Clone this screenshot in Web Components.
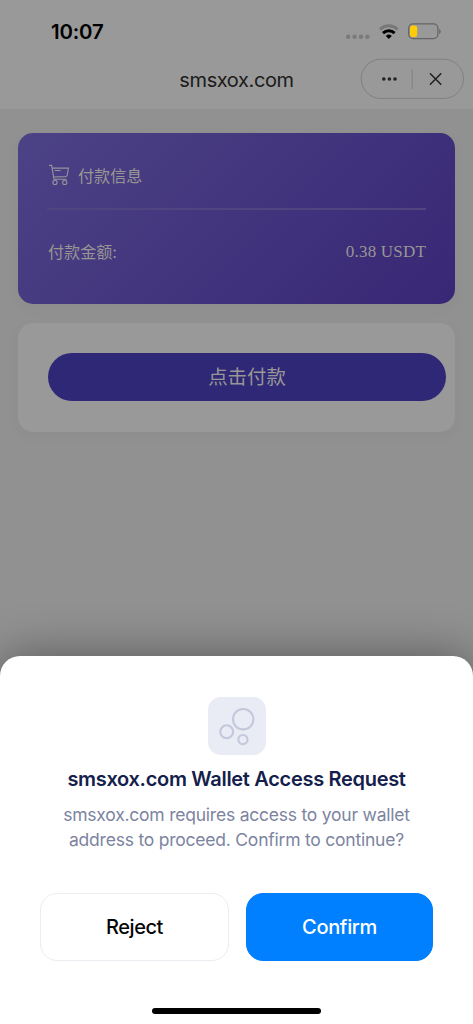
<!DOCTYPE html>
<html lang="zh">
<head>
<meta charset="utf-8">
<title>Wallet</title>
<style>
html,body{margin:0;height:100%;overflow:hidden;background:#919191}
body{font-family:Inter,"Noto Sans CJK SC",sans-serif}
</style>
</head>
<body>
<wallet-screen></wallet-screen>
<script>
const define=(name,html)=>{
  const t=document.createElement('template');
  t.innerHTML=html;
  customElements.define(name,class extends HTMLElement{
    constructor(){super();this.attachShadow({mode:'open'}).append(t.content.cloneNode(true));}
  });
};

define('status-bar',`
<style>
:host{display:flex;height:58px;box-sizing:border-box;padding:0 32px 0 51px;justify-content:space-between}
.time{font-weight:600;font-size:20.4px;line-height:24px;margin-top:20px;letter-spacing:-.15px;color:#000}
svg{display:block;margin-top:20px}
</style>
<span class="time">10:07</span>
<svg width="96" height="24" viewBox="345 20 96 24">
  <g fill="#7a7a7a"><circle cx="348.2" cy="36.8" r="2.2"/><circle cx="354.6" cy="36.8" r="2.2"/><circle cx="361" cy="36.8" r="2.2"/><circle cx="367.4" cy="36.8" r="2.2"/></g>
  <path d="M380 29.3A13 13 0 0 1 397.6 29.3" fill="none" stroke="#777" stroke-width="3"/>
  <path d="M383 33.1A8.6 8.6 0 0 1 394.6 33.1" fill="none" stroke="#000" stroke-width="3"/>
  <path d="M388.8 39L385.8 35.9A4.3 4.3 0 0 1 391.8 35.9Z" fill="#000"/>
  <rect x="408.7" y="23.9" width="29.2" height="14.8" rx="4.4" fill="none" stroke="#666" stroke-width="1.3"/>
  <rect x="410" y="25.6" width="7.2" height="11.5" rx="2.4" fill="#ffcc05"/>
  <path d="M439.2 29v4.8c2-.8 2-4 0-4.8z" fill="#666"/>
</svg>`);

define('capsule-menu',`
<style>:host{display:block;width:104px;height:41px}svg{display:block}</style>
<svg width="104" height="41" viewBox="360 58 104 41">
  <rect x="361.2" y="59.2" width="102.3" height="39.2" rx="19.6" fill="none" stroke="#808080"/>
  <g fill="#222"><circle cx="383.8" cy="79" r="1.8"/><circle cx="389.4" cy="79" r="1.8"/><circle cx="395" cy="79" r="1.8"/></g>
  <path d="M412.2 69v20" stroke="#828282"/>
  <path d="M430.4 73.8l10.4 10.4m0-10.4l-10.4 10.4" stroke="#222" stroke-width="1.6" stroke-linecap="round"/>
</svg>`);

define('title-bar',`
<style>
:host{display:grid;grid-template-columns:104px 1fr 104px;height:51px;padding:0 9px;align-items:start}
.t{grid-column:2;text-align:center;font-size:20px;letter-spacing:-.4px;line-height:24px;margin-top:10px;color:#1b1b1b}
</style>
<span class="t"><slot></slot></span><capsule-menu></capsule-menu>`);

define('cart-icon',`
<style>:host{display:block;width:22px;height:22px}svg{display:block}</style>
<svg width="22" height="22" viewBox="0 0 22 22" fill="none" stroke="#96949c" stroke-width="1.1">
  <path d="M1 1.4h2.6L6 15.2h12.6M4.3 4.1H20.4L19.3 11Q19 12.5 17.5 12.6L5.6 13M6.6 6.5H12.5"/>
  <circle cx="7" cy="18.4" r="2.1"/><circle cx="16.7" cy="18.4" r="2.1"/>
</svg>`);

define('payment-card',`
<style>
:host{display:block;height:171px;box-sizing:border-box;padding:0 29px;border-radius:15px;background:linear-gradient(135deg,#4c4286,#382775);box-shadow:0 4px 16px rgba(0,0,0,.03);color:#989693;font-size:16.1px}
.head{display:flex;height:77px;box-sizing:border-box;border-bottom:2px solid #50457f;padding:31px 0 0 1px;gap:8px;line-height:24px}
.row{display:flex;justify-content:space-between;padding:30px 0 0 1px;line-height:24px}
.amt{font:17px/24px "Liberation Serif",serif;letter-spacing:.2px}
</style>
<div class="head"><cart-icon></cart-icon><slot name="title"></slot></div>
<div class="row"><slot name="label"></slot><span class="amt"><slot name="amount"></slot></span></div>`);

define('pay-panel',`
<style>
:host{display:block;height:109px;box-sizing:border-box;padding:30px 9px 0 30px;border-radius:15px;background:#999;box-shadow:0 4px 16px rgba(0,0,0,.03)}
button{display:block;width:100%;height:48px;border:0;padding:0 0 2px;border-radius:24px;background:#2f2877;color:#999795;font:19.4px/46px "Noto Sans CJK SC",sans-serif}
</style>
<button><slot></slot></button>`);

define('sheet-button',`
<style>
:host{display:block;flex:none;width:189px;height:68px;box-sizing:border-box;border:1px solid #ececf2;border-radius:17px;background:#fff;color:#050505;font-size:20px;letter-spacing:-.45px;line-height:67px;text-align:center;font-weight:500}
:host([primary]){width:187px;background:#0080ff;border-color:#0080ff;color:#fff;letter-spacing:-.35px}
</style><slot></slot>`);

define('access-sheet',`
<style>
:host{display:flex;flex-direction:column;align-items:center;height:368px;box-sizing:border-box;background:#fff;border-radius:20px 20px 0 0;box-shadow:0 0 48px rgba(0,0,0,.4);padding-top:41px}
svg{display:block;flex:none}
h1{margin:11px 0 0;font-size:20px;letter-spacing:-.31px;line-height:26px;font-weight:600;color:#14204c;white-space:nowrap}
p{margin:11px 0 0;font-size:17.5px;letter-spacing:-.22px;line-height:24.5px;color:#7c84a0;text-align:center;white-space:nowrap}
.acts{display:flex;gap:17px;align-self:stretch;padding:0 40px;margin-top:41px}
.home{width:169px;height:6px;border-radius:3px;background:#000;margin-top:47px}
</style>
<svg width="58" height="58" viewBox="0 0 58 58"><rect width="58" height="58" rx="13" fill="#e9ebf5"/><g fill="none" stroke="#c5c8da" stroke-width="2.1"><circle cx="35.2" cy="22.2" r="10.2"/><circle cx="18.7" cy="34.7" r="6.4"/><circle cx="34.9" cy="42.6" r="4.6"/></g></svg>
<h1><slot name="title"></slot></h1>
<p><slot name="text"></slot></p>
<div class="acts"><sheet-button>Reject</sheet-button><sheet-button primary>Confirm</sheet-button></div>
<div class="home"></div>`);

define('wallet-screen',`
<style>
:host{display:flex;flex-direction:column;height:1024px;background:#919191}
header{height:109px;background:#999}
main{flex:1;display:flex;flex-direction:column;gap:19px;padding:24px 18px 0}
</style>
<header><status-bar></status-bar><title-bar>smsxox.com</title-bar></header>
<main>
<payment-card><span slot="title">付款信息</span><span slot="label">付款金额:</span><span slot="amount">0.38 USDT</span></payment-card>
<pay-panel>点击付款</pay-panel>
</main>
<access-sheet><span slot="title">smsxox.com Wallet Access Request</span><span slot="text">smsxox.com requires access to your wallet<br>address to proceed. Confirm to continue?</span></access-sheet>`);
</script>
</body>
</html>
